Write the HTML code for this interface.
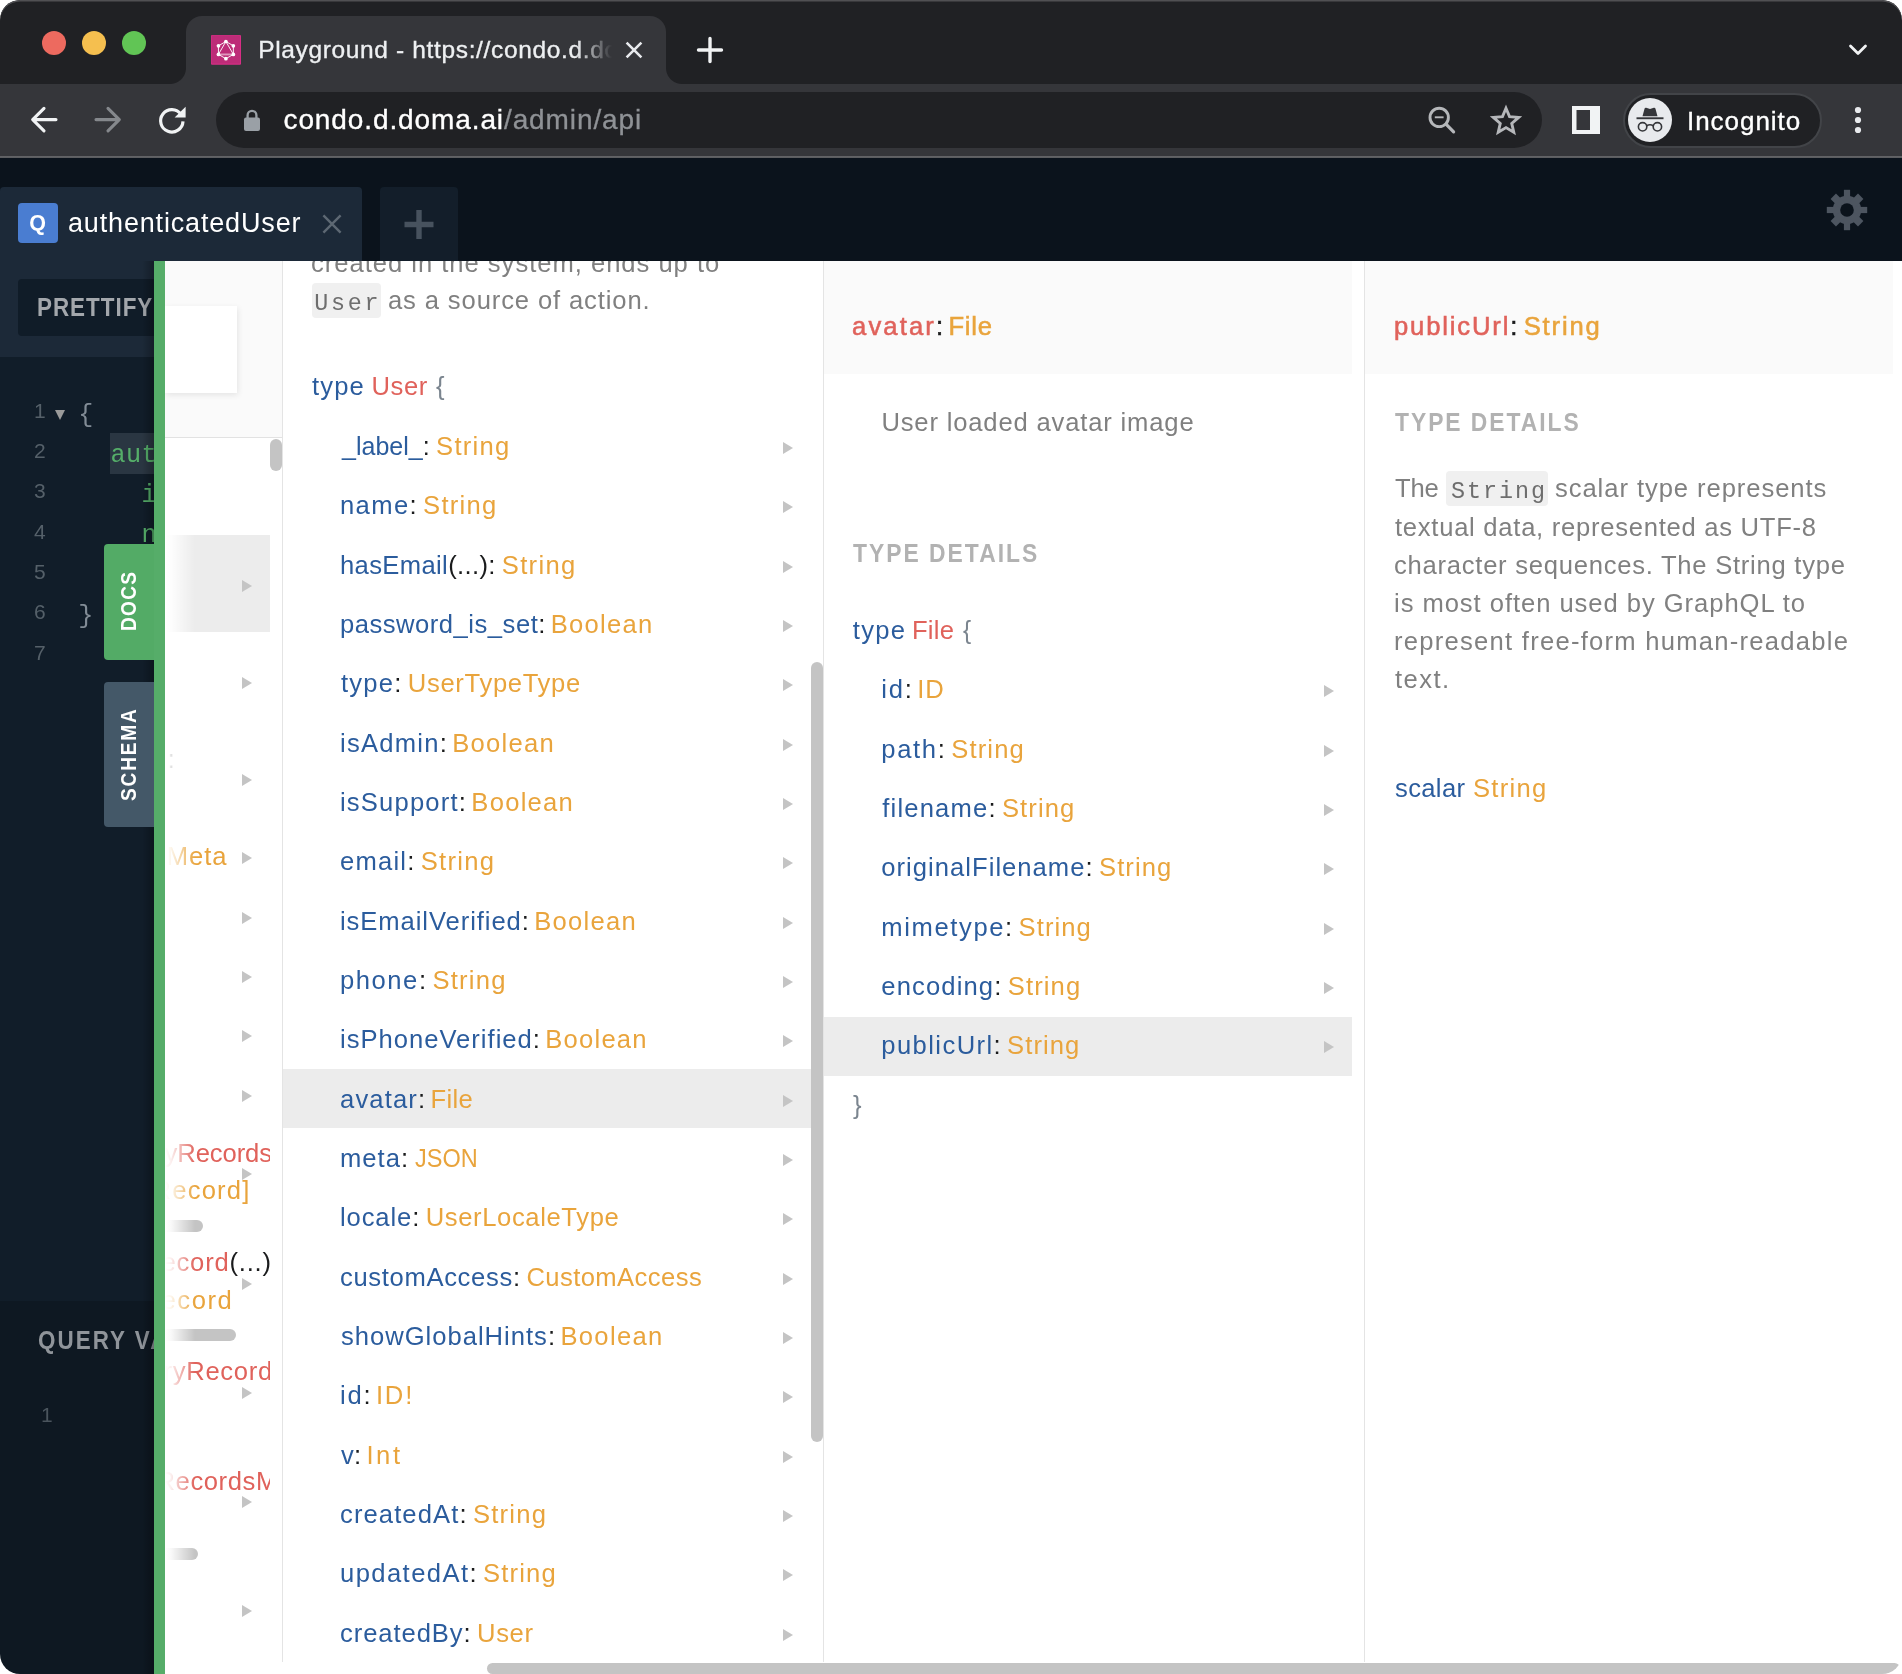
<!DOCTYPE html>
<html lang="en">
<head>
<meta charset="utf-8">
<title>Playground</title>
<style>
*{box-sizing:border-box;margin:0;padding:0}
html,body{width:1902px;height:1674px;background:#fff;overflow:hidden}
body{font-family:"Liberation Sans",sans-serif;-webkit-font-smoothing:antialiased}
#win{will-change:transform;position:absolute;left:0;top:0;width:1902px;height:1674px;border-radius:20px;overflow:hidden;background:#fff}
.a{position:absolute}
.t{position:absolute;white-space:nowrap;line-height:1;font-size:25.2px}
.mono{font-family:"Liberation Mono",monospace}
/* chrome */
#titlebar{left:0;top:0;width:1902px;height:84px;background:#202124}
#edge{left:0;top:0;width:1902px;height:40px;border-radius:20px 20px 0 0;box-shadow:inset 0 1.5px 0 #505053;pointer-events:none}
#ctab{left:186px;top:16px;width:480px;height:68px;background:#35363a;border-radius:16px 16px 0 0}
#ctab:before,#ctab:after{content:"";position:absolute;bottom:0;width:16px;height:16px}
#ctab:before{left:-16px;background:radial-gradient(circle at 0 0,rgba(53,54,58,0) 15.5px,#35363a 16.5px)}
#ctab:after{right:-16px;background:radial-gradient(circle at 100% 0,rgba(53,54,58,0) 15.5px,#35363a 16.5px)}
.light{width:24px;height:24px;border-radius:50%;top:31px}
#toolbar{left:0;top:84px;width:1902px;height:72px;background:#35363a}
#tbline{left:0;top:156px;width:1902px;height:2px;background:linear-gradient(#5e5f62,#66676a 60%,#4a4c50)}
#omni{left:216px;top:92px;width:1326px;height:56px;border-radius:28px;background:#202124}
#incog{left:1623px;top:92.5px;width:198.5px;height:55px;border-radius:27.5px;background:#202124;border:2px solid #424448}
/* page */
#pbar{left:0;top:158px;width:1902px;height:103px;background:#0b131c}
#ptab{left:0;top:187px;width:362px;height:74px;background:#1c2938;border-radius:4px 4px 0 0}
#pplus{left:380px;top:187px;width:78px;height:74px;background:#131e2a;border-radius:4px 4px 0 0}
#qb{left:18px;top:203px;width:40px;height:40px;border-radius:4px;background:#4a7dd1}
#edtop{left:0;top:261px;width:154px;height:96px;background:#1c2938}
#pret{left:18px;top:279px;width:140px;height:57px;border-radius:4px 0 0 4px;background:#101c28}
#editor{left:0;top:357px;width:154px;height:944px;background:#111d29}
#vars{left:0;top:1301px;width:154px;height:373px;background:#0e1822}
#sel{left:110px;top:433px;width:44px;height:41px;background:#2a3642}
#docsbtn{left:103.5px;top:543.5px;width:50.5px;height:116px;border-radius:4px 0 0 4px;background:#53ab66}
#schbtn{left:103.5px;top:681.5px;width:50.5px;height:145.5px;border-radius:4px 0 0 4px;background:#445868}
.rot{position:absolute;white-space:nowrap;line-height:1;transform-origin:0 0;transform:rotate(-90deg) scaleX(.85);color:#fff;font-weight:bold;font-size:22.5px}
#stripe{left:154px;top:261px;width:11px;height:1413px;background:#56ad69}
/* docs */
#docs{left:165px;top:261px;width:1737px;height:1413px;background:#fff;overflow:hidden}
.vb{position:absolute;top:0;width:1px;height:1401px;background:#e4e4e4}
.hd{position:absolute;top:0;height:113px;background:#fafafa}
.rowsel{position:absolute;background:#ececec}
.thumb{position:absolute;background:#c4c4c4;border-radius:6px}
.k{color:#2b5c9d}.ty{color:#e9a43c}.r{color:#e0625b}.p{color:#1a1b1c}.g{color:#808080}.br{color:#7b858f}
.arr{position:absolute;width:0;height:0;border-left:10px solid #c4c4c4;border-top:6px solid transparent;border-bottom:6px solid transparent}
.code{position:absolute;background:#f0f0f0;border-radius:4px}
.sec{color:#b2b2b2;font-weight:bold}
</style>
</head>
<body>
<div id="win">
<div class="a" id="titlebar"></div>
<div class="a" id="ctab"></div>
<div class="a light" style="left:42px;background:#ed6a5f"></div>
<div class="a light" style="left:82px;background:#f5bf4f"></div>
<div class="a light" style="left:122px;background:#61c555"></div>
<svg class="a" style="left:211px;top:34.8px" width="30" height="29.8" viewBox="0 0 30 29.8">
 <rect width="30" height="29.8" rx="1" fill="#d92f86"/>
 <rect x="0.6" y="0.4" width="28.4" height="28.2" fill="#bd2c78"/>
 <g fill="none" stroke="#fff" stroke-width="1" stroke-linejoin="round" stroke-opacity=".92">
  <polygon points="14.9,6.5 22.35,10.8 22.35,19.4 14.9,23.7 7.45,19.4 7.45,10.8"/>
  <path d="M7.45 19.4L14.9 6.5L22.35 19.4"/>
 </g>
 <rect x="9" y="18.5" width="11.8" height="1.9" fill="#fff" fill-opacity=".5"/>
 <g fill="#fff"><circle cx="14.9" cy="6.5" r="1.85"/><circle cx="22.35" cy="10.8" r="1.85"/><circle cx="22.35" cy="19.4" r="1.85"/><circle cx="14.9" cy="23.7" r="1.85"/><circle cx="7.45" cy="19.4" r="1.85"/><circle cx="7.45" cy="10.8" r="1.85"/></g>
</svg>
<div class="a" style="left:258px;top:30px;width:356px;height:40px;overflow:hidden;-webkit-mask-image:linear-gradient(90deg,#000 318px,transparent 354px);mask-image:linear-gradient(90deg,#000 318px,transparent 354px)">
 <span class="t" style="top:7.90px;left:2.2px;font-size:24.5px;color:#eef0f2;-webkit-text-stroke:.35px #eef0f2"><span style="letter-spacing:0.647px;margin-left:-2.00px;">Playground - https://condo.d.d</span>oma.ai/admin/api</span>
</div>
<svg class="a" style="left:624px;top:40px" width="20" height="20" viewBox="0 0 20 20"><path d="M2.6 2.6L17.4 17.4M17.4 2.6L2.6 17.4" stroke="#e8eaed" stroke-width="2.6" fill="none"/></svg>
<svg class="a" style="left:696px;top:36px" width="28" height="28" viewBox="0 0 28 28"><path d="M14 2.5V25.5M2.5 14H25.5" stroke="#f1f3f4" stroke-width="3.4" stroke-linecap="round" fill="none"/></svg>
<svg class="a" style="left:1846px;top:40px" width="24" height="20" viewBox="0 0 24 20"><path d="M4.5 6L12 13.5L19.5 6" stroke="#f1f3f4" stroke-width="2.8" fill="none" stroke-linecap="round" stroke-linejoin="round"/></svg>
<div class="a" id="toolbar"></div>
<div class="a" id="tbline"></div>
<div class="a" id="omni"></div>
<!-- nav icons -->
<svg class="a" style="left:28px;top:104px" width="32" height="32" viewBox="0 0 32 32"><path d="M28 15.6H5.5M16 4.3L4.7 15.6L16 26.9" stroke="#f1f3f4" stroke-width="3.1" fill="none" stroke-linecap="round" stroke-linejoin="round"/></svg>
<svg class="a" style="left:92px;top:104px" width="32" height="32" viewBox="0 0 32 32"><path d="M4 15.6H26.5M16 4.3L27.3 15.6L16 26.9" stroke="#85888c" stroke-width="3.1" fill="none" stroke-linecap="round" stroke-linejoin="round"/></svg>
<svg class="a" style="left:156px;top:104px" width="32" height="32" viewBox="0 0 32 32"><path d="M25 10.4A11.2 11.2 0 1 0 27 17.4" stroke="#f1f3f4" stroke-width="3.2" fill="none"/><path d="M29.6 2.8V13.6H18.6Z" fill="#f1f3f4"/></svg>
<svg class="a" style="left:242px;top:108px" width="20" height="24" viewBox="0 0 20 24"><rect x="2" y="9.5" width="16" height="13.5" rx="2" fill="#9aa0a6"/><path d="M5.6 10V7.2a4.4 4.4 0 0 1 8.8 0V10" stroke="#9aa0a6" stroke-width="2.3" fill="none"/></svg>
<span class="t" style="letter-spacing:0.895px;margin-left:-1.00px;top:106.00px;left:284.5px;font-size:28px;color:#fff"><span style="-webkit-text-stroke:.35px #fff">condo.d.doma.ai</span><span style="color:#8f9296;-webkit-text-stroke:.3px #8f9296">/admin/api</span></span>
<svg class="a" style="left:1425px;top:103px" width="34" height="34" viewBox="0 0 34 34"><circle cx="14.2" cy="14.4" r="9.2" stroke="#b5b7ba" stroke-width="2.9" fill="none"/><path d="M21 21.2L28.6 28.8" stroke="#b5b7ba" stroke-width="3.2" stroke-linecap="round"/><path d="M9.8 14.3H18.6" stroke="#b5b7ba" stroke-width="1.9"/></svg>
<svg class="a" style="left:1490px;top:104px" width="32" height="32" viewBox="0 0 24 24"><path d="M12 3.2l2.65 6.3 6.8.58-5.16 4.47 1.55 6.65L12 17.68 6.16 21.2l1.55-6.65L2.55 10.08l6.8-.58z" stroke="#b5b7ba" stroke-width="2.15" fill="none" stroke-linejoin="miter"/></svg>
<svg class="a" style="left:1571px;top:105px" width="30" height="30" viewBox="0 0 30 30"><path d="M1 1H29V29H1Z M5.5 5V25H19V5Z" fill="#f1f3f4" fill-rule="evenodd"/></svg>
<div class="a" id="incog"></div>
<svg class="a" style="left:1628px;top:98px" width="44" height="44" viewBox="0 0 44 44">
 <circle cx="22" cy="22" r="22" fill="#e8eaed"/>
 <path d="M14.5 18.2L16.6 10.6Q17 9.4 18.2 9.8L22 11L25.8 9.8Q27 9.4 27.4 10.6L29.5 18.2Z" fill="#35363a"/>
 <rect x="8.5" y="19.3" width="27" height="1.9" fill="#35363a"/>
 <circle cx="14.6" cy="28.8" r="4.2" stroke="#35363a" stroke-width="1.6" fill="none"/>
 <circle cx="29.4" cy="28.8" r="4.2" stroke="#35363a" stroke-width="1.6" fill="none"/>
 <path d="M18.7 27.8Q22 25.8 25.3 27.8" stroke="#35363a" stroke-width="1.6" fill="none"/>
</svg>
<span class="t" style="letter-spacing:0.966px;margin-left:-2.00px;top:108.00px;left:1689px;font-size:26px;color:#fff;-webkit-text-stroke:.35px #fff">Incognito</span>
<svg class="a" style="left:1852px;top:104px" width="12" height="32" viewBox="0 0 12 32"><circle cx="6" cy="6" r="3.1" fill="#e8eaed"/><circle cx="6" cy="16" r="3.1" fill="#e8eaed"/><circle cx="6" cy="26" r="3.1" fill="#e8eaed"/></svg>
<div class="a" id="edge"></div>

<div class="a" id="pbar"></div>
<div class="a" id="ptab"></div>
<div class="a" id="qb"></div>
<span class="t" style="top:213.30px;left:29.2px;font-size:21.5px;font-weight:bold;color:#fff">Q</span>
<span class="t" style="letter-spacing:0.834px;margin-left:-1.00px;top:210.00px;left:69px;font-size:27px;color:#fff">authenticatedUser</span>
<svg class="a" style="left:320px;top:212px" width="24" height="24" viewBox="0 0 24 24"><path d="M3.4 3.4L20.6 20.6M20.6 3.4L3.4 20.6" stroke="#5d6873" stroke-width="2.4" fill="none"/></svg>
<div class="a" id="pplus"></div>
<svg class="a" style="left:403px;top:208.5px" width="32" height="32" viewBox="0 0 32 32"><path d="M16 1V30M1.5 15.5H30.5" stroke="#47525e" stroke-width="5.4" fill="none"/></svg>
<svg class="a" style="left:1825px;top:187.5px" width="44" height="44" viewBox="-22 -22 44 44">
 <g fill="#4d5560">
  <circle r="14.2"/>
  <rect x="-3.1" y="-20.2" width="6.2" height="40.4"/>
  <rect x="-3.8" y="-19.4" width="7.6" height="38.8" transform="rotate(45)"/>
  <rect x="-3.1" y="-20.2" width="6.2" height="40.4" transform="rotate(90)"/>
  <rect x="-3.8" y="-19.4" width="7.6" height="38.8" transform="rotate(135)"/>
 </g>
 <circle r="6.8" fill="#0b131c"/>
</svg>
<div class="a" id="edtop"></div>
<div class="a" id="pret"></div>
<div class="a" id="editor"></div>
<div class="a" id="vars"></div>
<div class="a" style="left:0;top:261px;width:154px;height:1413px;overflow:hidden">
 <span class="t" style="transform-origin:0 0;transform:scaleX(0.88);letter-spacing:1.106px;margin-left:-0.88px;top:34.20px;left:37.75px;font-size:25.5px;font-weight:bold;color:#a3a7ac">PRETTIFY</span>
 <span class="t" style="transform-origin:0 0;transform:scaleX(0.88);letter-spacing:2.279px;margin-left:-0.88px;top:1067.30px;left:39.2px;font-size:25.5px;font-weight:bold;color:#8f949a">QUERY VARIABLES</span>
 <span class="t" style="top:1142.50px;left:41px;font-size:21px;color:#4a545d">1</span>
</div>
<div class="a" id="sel"></div>
<div class="a" style="left:0;top:357px;width:154px;height:944px;overflow:hidden;font-size:21.6px;color:#556069">
 <span class="t" style="top:42.70px;left:34px;font-size:21px">1</span>
 <span class="t" style="top:83.00px;left:34px;font-size:21px">2</span>
 <span class="t" style="top:123.30px;left:34px;font-size:21px">3</span>
 <span class="t" style="top:163.60px;left:34px;font-size:21px">4</span>
 <span class="t" style="top:203.90px;left:34px;font-size:21px">5</span>
 <span class="t" style="top:244.20px;left:34px;font-size:21px">6</span>
 <span class="t" style="top:284.50px;left:34px;font-size:21px">7</span>
 <div class="a" style="left:55px;top:53px;width:0;height:0;border-top:10px solid #9b9b9b;border-left:5px solid transparent;border-right:5px solid transparent"></div>
 <span class="t mono" style="top:45.50px;left:78.2px;font-size:25.2px;letter-spacing:.38px;color:#828c96">{</span>
 <span class="t mono" style="top:85.80px;left:110.4px;font-size:25.2px;letter-spacing:.38px;color:#55ae69">authenticatedUser {</span>
 <span class="t mono" style="top:126.10px;left:141.4px;font-size:25.2px;letter-spacing:.38px;color:#55ae69">id</span>
 <span class="t mono" style="top:166.40px;left:141.4px;font-size:25.2px;letter-spacing:.38px;color:#55ae69">name</span>
 <span class="t mono" style="top:247.30px;left:78.2px;font-size:25.2px;letter-spacing:.38px;color:#828c96">}</span>
</div>
<div class="a" style="left:142px;top:261px;width:12px;height:1413px;background:linear-gradient(90deg,rgba(0,0,0,0),rgba(0,0,0,.28))"></div>
<div class="a" id="docsbtn"></div>
<div class="a" id="schbtn"></div>
<div class="rot" style="left:118.3px;top:631px;letter-spacing:1.5px">DOCS</div>
<div class="rot" style="left:118.3px;top:801px;letter-spacing:2.1px">SCHEMA</div>
<div class="a" id="stripe"></div>

<div class="a" id="docs"><div class="a" style="left:-165px;top:-261px;width:1902px;height:1674px">
<div class="a" style="left:165px;top:261px;width:117px;height:177px;background:#fafafa;border-bottom:1px solid #e2e2e2"></div>
<div class="a" style="left:165px;top:306px;width:72px;height:87px;background:#fff;box-shadow:1px 2px 6px rgba(0,0,0,.09)"></div>
<div class="rowsel" style="left:165px;top:535px;width:105px;height:97px"></div>
<div class="a" style="left:165px;top:440px;width:105px;height:1222px;overflow:hidden">
<span class="t" style="top:307.00px;left:2.6px;font-size:25.6px;"><span style="color:#000">:</span></span>
<span class="t" style="letter-spacing:0.943px;margin-left:-2.00px;top:404.00px;left:3.8px;font-size:25.6px;"><span class="ty">Meta</span></span>
<span class="t" style="letter-spacing:-0.102px;margin-left:0.00px;top:701.00px;left:-0.4px;font-size:25.6px;"><span class="r">yRecords</span></span>
<span class="t" style="letter-spacing:1.181px;margin-left:-2.00px;top:738.30px;left:-10.4px;font-size:25.6px;"><span class="ty">Record]</span></span>
<span class="t" style="letter-spacing:0.789px;margin-left:-1.00px;top:810.00px;left:-2.5px;font-size:25.6px;"><span class="r">ecord</span><span class="p">(...)</span></span>
<span class="t" style="letter-spacing:1.551px;margin-left:-1.00px;top:847.90px;left:-2.5px;font-size:25.6px;"><span class="ty">ecord</span></span>
<span class="t" style="letter-spacing:0.701px;margin-left:-1.00px;top:919.00px;left:-0.5px;font-size:25.6px;"><span class="r">ryRecord</span></span>
<span class="t" style="top:1029.00px;left:-6.5px;font-size:25.6px;"><span class="r"><span style="letter-spacing:0.581px;margin-left:-2.00px;">Records</span>Meta</span></span>
</div>
<div class="thumb" style="left:140px;top:1220.0px;width:63px;height:12.0px"></div>
<div class="thumb" style="left:140px;top:1329.0px;width:96px;height:12.0px"></div>
<div class="thumb" style="left:140px;top:1548.2px;width:58px;height:12.0px"></div>
<div class="a" style="left:165px;top:440px;width:30px;height:1222px;background:linear-gradient(90deg,#fff 0,rgba(255,255,255,.9) 20%,rgba(255,255,255,0) 100%)"></div>
<div class="arr" style="left:242px;top:580.0px"></div>
<div class="arr" style="left:242px;top:677.0px"></div>
<div class="arr" style="left:242px;top:774.0px"></div>
<div class="arr" style="left:242px;top:852.0px"></div>
<div class="arr" style="left:242px;top:912.0px"></div>
<div class="arr" style="left:242px;top:971.0px"></div>
<div class="arr" style="left:242px;top:1030.0px"></div>
<div class="arr" style="left:242px;top:1090.0px"></div>
<div class="arr" style="left:242px;top:1168.2px"></div>
<div class="arr" style="left:242px;top:1277.5px"></div>
<div class="arr" style="left:242px;top:1386.5px"></div>
<div class="arr" style="left:242px;top:1496.2px"></div>
<div class="arr" style="left:242px;top:1605.2px"></div>
<div class="thumb" style="left:270px;top:439px;width:12px;height:32px"></div>
<div class="vb" style="left:282px;top:261px"></div>
<span class="t g" style="letter-spacing:0.976px;margin-left:-1.00px;top:251.00px;left:312px;font-size:25.6px">created in the system, ends up to</span>
<div class="code" style="left:312px;top:283px;width:68.5px;height:34.5px"></div>
<span class="t mono" style="letter-spacing:2.727px;margin-left:-1.00px;top:292.50px;left:315.3px;font-size:23.4px;color:#6e6e6e">User</span>
<span class="t g" style="letter-spacing:0.873px;margin-left:-1.00px;top:288.00px;left:389px;font-size:25.6px">as a source of action.</span>
<span class="t k" style="letter-spacing:1.148px;margin-left:0.00px;top:373.70px;left:312.0px;font-size:25.6px">type</span>
<span class="t r" style="letter-spacing:0.625px;margin-left:-1.00px;top:373.70px;left:372.4px;font-size:25.6px">User</span>
<span class="t br" style="letter-spacing:0.985px;margin-left:0.00px;top:373.70px;left:436.0px;font-size:25.6px">{</span>
<div class="rowsel" style="left:283px;top:1069px;width:528px;height:59px"></div>
<span class="t" style="transform-origin:0 0;transform:scaleX(0.9779);letter-spacing:0.000px;margin-left:0.98px;top:433.90px;left:341.0px;font-size:25.6px;"><span class="k">_label_</span><span class="p">:</span></span>
<span class="t ty" style="letter-spacing:1.255px;margin-left:-1.00px;top:433.90px;left:437.1px;font-size:25.6px;">String</span>
<div class="arr" style="left:783px;top:441.9px"></div>
<span class="t" style="letter-spacing:1.389px;margin-left:-1.00px;top:493.20px;left:341.0px;font-size:25.6px;"><span class="k">name</span><span class="p">:</span></span>
<span class="t ty" style="letter-spacing:1.255px;margin-left:-1.00px;top:493.20px;left:424.1px;font-size:25.6px;">String</span>
<div class="arr" style="left:783px;top:501.2px"></div>
<span class="t" style="letter-spacing:0.356px;margin-left:-1.00px;top:552.60px;left:341.0px;font-size:25.6px;"><span class="k">hasEmail<span class="p">(...)</span></span><span class="p">:</span></span>
<span class="t ty" style="letter-spacing:1.315px;margin-left:-1.00px;top:552.60px;left:502.8px;font-size:25.6px;">String</span>
<div class="arr" style="left:783px;top:560.6px"></div>
<span class="t" style="letter-spacing:0.510px;margin-left:-1.00px;top:611.90px;left:341.0px;font-size:25.6px;"><span class="k">password_is_set</span><span class="p">:</span></span>
<span class="t ty" style="letter-spacing:1.249px;margin-left:-2.00px;top:611.90px;left:552.8px;font-size:25.6px;">Boolean</span>
<div class="arr" style="left:783px;top:619.9px"></div>
<span class="t" style="letter-spacing:1.224px;margin-left:0.00px;top:671.20px;left:341.0px;font-size:25.6px;"><span class="k">type</span><span class="p">:</span></span>
<span class="t ty" style="letter-spacing:0.674px;margin-left:-1.00px;top:671.20px;left:408.8px;font-size:25.6px;">UserTypeType</span>
<div class="arr" style="left:783px;top:679.2px"></div>
<span class="t" style="letter-spacing:1.236px;margin-left:-1.00px;top:730.60px;left:341.0px;font-size:25.6px;"><span class="k">isAdmin</span><span class="p">:</span></span>
<span class="t ty" style="letter-spacing:1.266px;margin-left:-2.00px;top:730.60px;left:454.2px;font-size:25.6px;">Boolean</span>
<div class="arr" style="left:783px;top:738.6px"></div>
<span class="t" style="letter-spacing:1.185px;margin-left:-1.00px;top:789.90px;left:341.0px;font-size:25.6px;"><span class="k">isSupport</span><span class="p">:</span></span>
<span class="t ty" style="letter-spacing:1.266px;margin-left:-2.00px;top:789.90px;left:473.3px;font-size:25.6px;">Boolean</span>
<div class="arr" style="left:783px;top:797.9px"></div>
<span class="t" style="letter-spacing:1.223px;margin-left:-1.00px;top:849.20px;left:341.0px;font-size:25.6px;"><span class="k">email</span><span class="p">:</span></span>
<span class="t ty" style="letter-spacing:1.255px;margin-left:-1.00px;top:849.20px;left:421.8px;font-size:25.6px;">String</span>
<div class="arr" style="left:783px;top:857.2px"></div>
<span class="t" style="letter-spacing:0.928px;margin-left:-1.00px;top:908.60px;left:341.0px;font-size:25.6px;"><span class="k">isEmailVerified</span><span class="p">:</span></span>
<span class="t ty" style="letter-spacing:1.233px;margin-left:-2.00px;top:908.60px;left:536.3px;font-size:25.6px;">Boolean</span>
<div class="arr" style="left:783px;top:916.6px"></div>
<span class="t" style="letter-spacing:1.543px;margin-left:-1.00px;top:967.90px;left:341.0px;font-size:25.6px;"><span class="k">phone</span><span class="p">:</span></span>
<span class="t ty" style="letter-spacing:1.235px;margin-left:-1.00px;top:967.90px;left:433.4px;font-size:25.6px;">String</span>
<div class="arr" style="left:783px;top:975.9px"></div>
<span class="t" style="letter-spacing:0.995px;margin-left:-1.00px;top:1027.20px;left:341.0px;font-size:25.6px;"><span class="k">isPhoneVerified</span><span class="p">:</span></span>
<span class="t ty" style="letter-spacing:1.216px;margin-left:-2.00px;top:1027.20px;left:547.3px;font-size:25.6px;">Boolean</span>
<div class="arr" style="left:783px;top:1035.2px"></div>
<span class="t" style="letter-spacing:1.141px;margin-left:-1.00px;top:1086.60px;left:341.0px;font-size:25.6px;"><span class="k">avatar</span><span class="p">:</span></span>
<span class="t ty" style="letter-spacing:0.295px;margin-left:-2.00px;top:1086.60px;left:432.5px;font-size:25.6px;">File</span>
<div class="arr" style="left:783px;top:1094.6px"></div>
<span class="t" style="letter-spacing:0.995px;margin-left:-1.00px;top:1145.90px;left:341.0px;font-size:25.6px;"><span class="k">meta</span><span class="p">:</span></span>
<span class="t ty" style="transform-origin:0 0;transform:scaleX(0.9194);letter-spacing:0.000px;margin-left:0.00px;top:1145.90px;left:415.4px;font-size:25.6px;">JSON</span>
<div class="arr" style="left:783px;top:1153.9px"></div>
<span class="t" style="letter-spacing:0.885px;margin-left:-1.00px;top:1205.30px;left:341.0px;font-size:25.6px;"><span class="k">locale</span><span class="p">:</span></span>
<span class="t ty" style="letter-spacing:0.622px;margin-left:-1.00px;top:1205.30px;left:426.7px;font-size:25.6px;">UserLocaleType</span>
<div class="arr" style="left:783px;top:1213.3px"></div>
<span class="t" style="letter-spacing:0.657px;margin-left:-1.00px;top:1264.60px;left:341.0px;font-size:25.6px;"><span class="k">customAccess</span><span class="p">:</span></span>
<span class="t ty" style="letter-spacing:0.420px;margin-left:-1.00px;top:1264.60px;left:527.4px;font-size:25.6px;">CustomAccess</span>
<div class="arr" style="left:783px;top:1272.6px"></div>
<span class="t" style="letter-spacing:0.989px;margin-left:0.00px;top:1323.90px;left:341.0px;font-size:25.6px;"><span class="k">showGlobalHints</span><span class="p">:</span></span>
<span class="t ty" style="letter-spacing:1.316px;margin-left:-2.00px;top:1323.90px;left:562.4px;font-size:25.6px;">Boolean</span>
<div class="arr" style="left:783px;top:1331.9px"></div>
<span class="t" style="letter-spacing:1.732px;margin-left:-1.00px;top:1383.30px;left:341.0px;font-size:25.6px;"><span class="k">id</span><span class="p">:</span></span>
<span class="t ty" style="letter-spacing:1.846px;margin-left:-2.00px;top:1383.30px;left:377.9px;font-size:25.6px;">ID!</span>
<div class="arr" style="left:783px;top:1391.3px"></div>
<span class="t" style="letter-spacing:0.089px;margin-left:0.00px;top:1442.60px;left:341.0px;font-size:25.6px;"><span class="k">v</span><span class="p">:</span></span>
<span class="t ty" style="letter-spacing:2.621px;margin-left:-2.00px;top:1442.60px;left:368.4px;font-size:25.6px;">Int</span>
<div class="arr" style="left:783px;top:1450.6px"></div>
<span class="t" style="letter-spacing:1.091px;margin-left:-1.00px;top:1501.90px;left:341.0px;font-size:25.6px;"><span class="k">createdAt</span><span class="p">:</span></span>
<span class="t ty" style="letter-spacing:1.235px;margin-left:-1.00px;top:1501.90px;left:473.9px;font-size:25.6px;">String</span>
<div class="arr" style="left:783px;top:1509.9px"></div>
<span class="t" style="letter-spacing:1.420px;margin-left:-1.00px;top:1561.30px;left:341.0px;font-size:25.6px;"><span class="k">updatedAt</span><span class="p">:</span></span>
<span class="t ty" style="letter-spacing:1.155px;margin-left:-1.00px;top:1561.30px;left:484.0px;font-size:25.6px;">String</span>
<div class="arr" style="left:783px;top:1569.3px"></div>
<span class="t" style="letter-spacing:0.917px;margin-left:-1.00px;top:1620.60px;left:341.0px;font-size:25.6px;"><span class="k">createdBy</span><span class="p">:</span></span>
<span class="t ty" style="letter-spacing:0.659px;margin-left:-1.00px;top:1620.60px;left:478.0px;font-size:25.6px;">User</span>
<div class="arr" style="left:783px;top:1628.6px"></div>
<div class="thumb" style="left:811px;top:662px;width:12px;height:780px"></div>
<div class="vb" style="left:823px;top:261px"></div>
<div class="hd" style="left:824px;top:261px;width:528px"></div>
<span class="t" style="letter-spacing:2.141px;margin-left:-1.00px;top:313.50px;left:853.0px;font-size:25.6px;-webkit-text-stroke:.55px"><span class="r">avatar</span><span class="p">:</span></span>
<span class="t ty" style="letter-spacing:0.728px;margin-left:-2.00px;top:313.50px;left:950.5px;font-size:25.6px;-webkit-text-stroke:.55px">File</span>
<span class="t g" style="letter-spacing:0.833px;margin-left:-1.00px;top:409.80px;left:882.4px;font-size:25.6px">User loaded avatar image</span>
<span class="t sec" style="transform-origin:0 0;transform:scaleX(0.9);letter-spacing:2.237px;margin-left:0.00px;top:540.80px;left:853px;font-size:25.4px">TYPE DETAILS</span>
<span class="t k" style="letter-spacing:1.281px;margin-left:0.00px;top:618.00px;left:852.8px;font-size:25.6px">type</span>
<span class="t r" style="letter-spacing:0.228px;margin-left:-2.00px;top:618.00px;left:914.0px;font-size:25.6px">File</span>
<span class="t br" style="transform-origin:0 0;transform:scaleX(0.9540);letter-spacing:0.000px;margin-left:0.00px;top:618.00px;left:963.0px;font-size:25.6px">{</span>
<div class="rowsel" style="left:824px;top:1017px;width:528px;height:59px"></div>
<span class="t" style="letter-spacing:1.782px;margin-left:-1.00px;top:677.30px;left:882.3px;font-size:25.6px;"><span class="k">id</span><span class="p">:</span></span>
<span class="t ty" style="letter-spacing:0.889px;margin-left:-2.00px;top:677.30px;left:919.3px;font-size:25.6px;">ID</span>
<div class="arr" style="left:1324px;top:685.3px"></div>
<span class="t" style="letter-spacing:1.664px;margin-left:-1.00px;top:736.60px;left:882.3px;font-size:25.6px;"><span class="k">path</span><span class="p">:</span></span>
<span class="t ty" style="letter-spacing:1.115px;margin-left:-1.00px;top:736.60px;left:952.3px;font-size:25.6px;">String</span>
<div class="arr" style="left:1324px;top:744.6px"></div>
<span class="t" style="letter-spacing:1.167px;margin-left:0.00px;top:796.00px;left:882.3px;font-size:25.6px;"><span class="k">filename</span><span class="p">:</span></span>
<span class="t ty" style="letter-spacing:1.095px;margin-left:-1.00px;top:796.00px;left:1002.9px;font-size:25.6px;">String</span>
<div class="arr" style="left:1324px;top:804.0px"></div>
<span class="t" style="letter-spacing:1.025px;margin-left:-1.00px;top:855.30px;left:882.3px;font-size:25.6px;"><span class="k">originalFilename</span><span class="p">:</span></span>
<span class="t ty" style="letter-spacing:1.075px;margin-left:-1.00px;top:855.30px;left:1100.0px;font-size:25.6px;">String</span>
<div class="arr" style="left:1324px;top:863.3px"></div>
<span class="t" style="letter-spacing:1.606px;margin-left:-1.00px;top:914.60px;left:882.3px;font-size:25.6px;"><span class="k">mimetype</span><span class="p">:</span></span>
<span class="t ty" style="letter-spacing:1.075px;margin-left:-1.00px;top:914.60px;left:1019.6px;font-size:25.6px;">String</span>
<div class="arr" style="left:1324px;top:922.6px"></div>
<span class="t" style="letter-spacing:1.124px;margin-left:-1.00px;top:974.00px;left:882.3px;font-size:25.6px;"><span class="k">encoding</span><span class="p">:</span></span>
<span class="t ty" style="letter-spacing:1.135px;margin-left:-1.00px;top:974.00px;left:1008.7px;font-size:25.6px;">String</span>
<div class="arr" style="left:1324px;top:982.0px"></div>
<span class="t" style="letter-spacing:1.412px;margin-left:-1.00px;top:1033.30px;left:882.3px;font-size:25.6px;"><span class="k">publicUrl</span><span class="p">:</span></span>
<span class="t ty" style="letter-spacing:1.055px;margin-left:-1.00px;top:1033.30px;left:1008.1px;font-size:25.6px;">String</span>
<div class="arr" style="left:1324px;top:1041.3px"></div>
<span class="t br" style="top:1092.50px;left:853px;font-size:25.6px">}</span>
<div class="vb" style="left:1364px;top:261px"></div>
<div class="hd" style="left:1365px;top:261px;width:528px"></div>
<span class="t" style="letter-spacing:1.845px;margin-left:-1.00px;top:313.80px;left:1395.0px;font-size:25.6px;-webkit-text-stroke:.55px"><span class="r">publicUrl</span><span class="p">:</span></span>
<span class="t ty" style="letter-spacing:1.855px;margin-left:-1.00px;top:313.80px;left:1524.7px;font-size:25.6px;-webkit-text-stroke:.55px">String</span>
<span class="t sec" style="transform-origin:0 0;transform:scaleX(0.9);letter-spacing:2.186px;margin-left:0.00px;top:410.40px;left:1395px;font-size:25.4px">TYPE DETAILS</span>
<div class="code" style="left:1446.4px;top:471.3px;width:101.3px;height:34.3px"></div>
<span class="t g" style="letter-spacing:-0.188px;margin-left:0.00px;top:476.30px;left:1395px;font-size:25.6px">The</span>
<span class="t mono" style="letter-spacing:1.960px;margin-left:0.00px;top:481.00px;left:1451px;font-size:23.4px;color:#6e6e6e">String</span>
<span class="t g" style="letter-spacing:0.929px;margin-left:0.00px;top:476.30px;left:1555px;font-size:25.6px">scalar type represents</span>
<span class="t g" style="letter-spacing:0.731px;margin-left:0.00px;top:514.50px;left:1395px;font-size:25.6px">textual data, represented as UTF-8</span>
<span class="t g" style="letter-spacing:0.743px;margin-left:-1.00px;top:552.70px;left:1395px;font-size:25.6px">character sequences. The String type</span>
<span class="t g" style="letter-spacing:0.945px;margin-left:-1.00px;top:590.90px;left:1395px;font-size:25.6px">is most often used by GraphQL to</span>
<span class="t g" style="letter-spacing:1.254px;margin-left:-1.00px;top:629.10px;left:1395px;font-size:25.6px">represent free-form human-readable</span>
<span class="t g" style="letter-spacing:1.434px;margin-left:0.00px;top:667.30px;left:1395px;font-size:25.6px">text.</span>
<span class="t k" style="letter-spacing:0.348px;margin-left:0.00px;top:776.00px;left:1395.0px;font-size:25.6px">scalar</span>
<span class="t ty" style="letter-spacing:1.275px;margin-left:-1.00px;top:776.00px;left:1474.0px;font-size:25.6px">String</span>
<div class="a" style="left:165px;top:1662px;width:1737px;height:12px;background:#fff"></div>
<div class="thumb" style="left:487px;top:1662.5px;width:1413px;height:11.5px"></div>
</div></div>

</div>
</body>
</html>
